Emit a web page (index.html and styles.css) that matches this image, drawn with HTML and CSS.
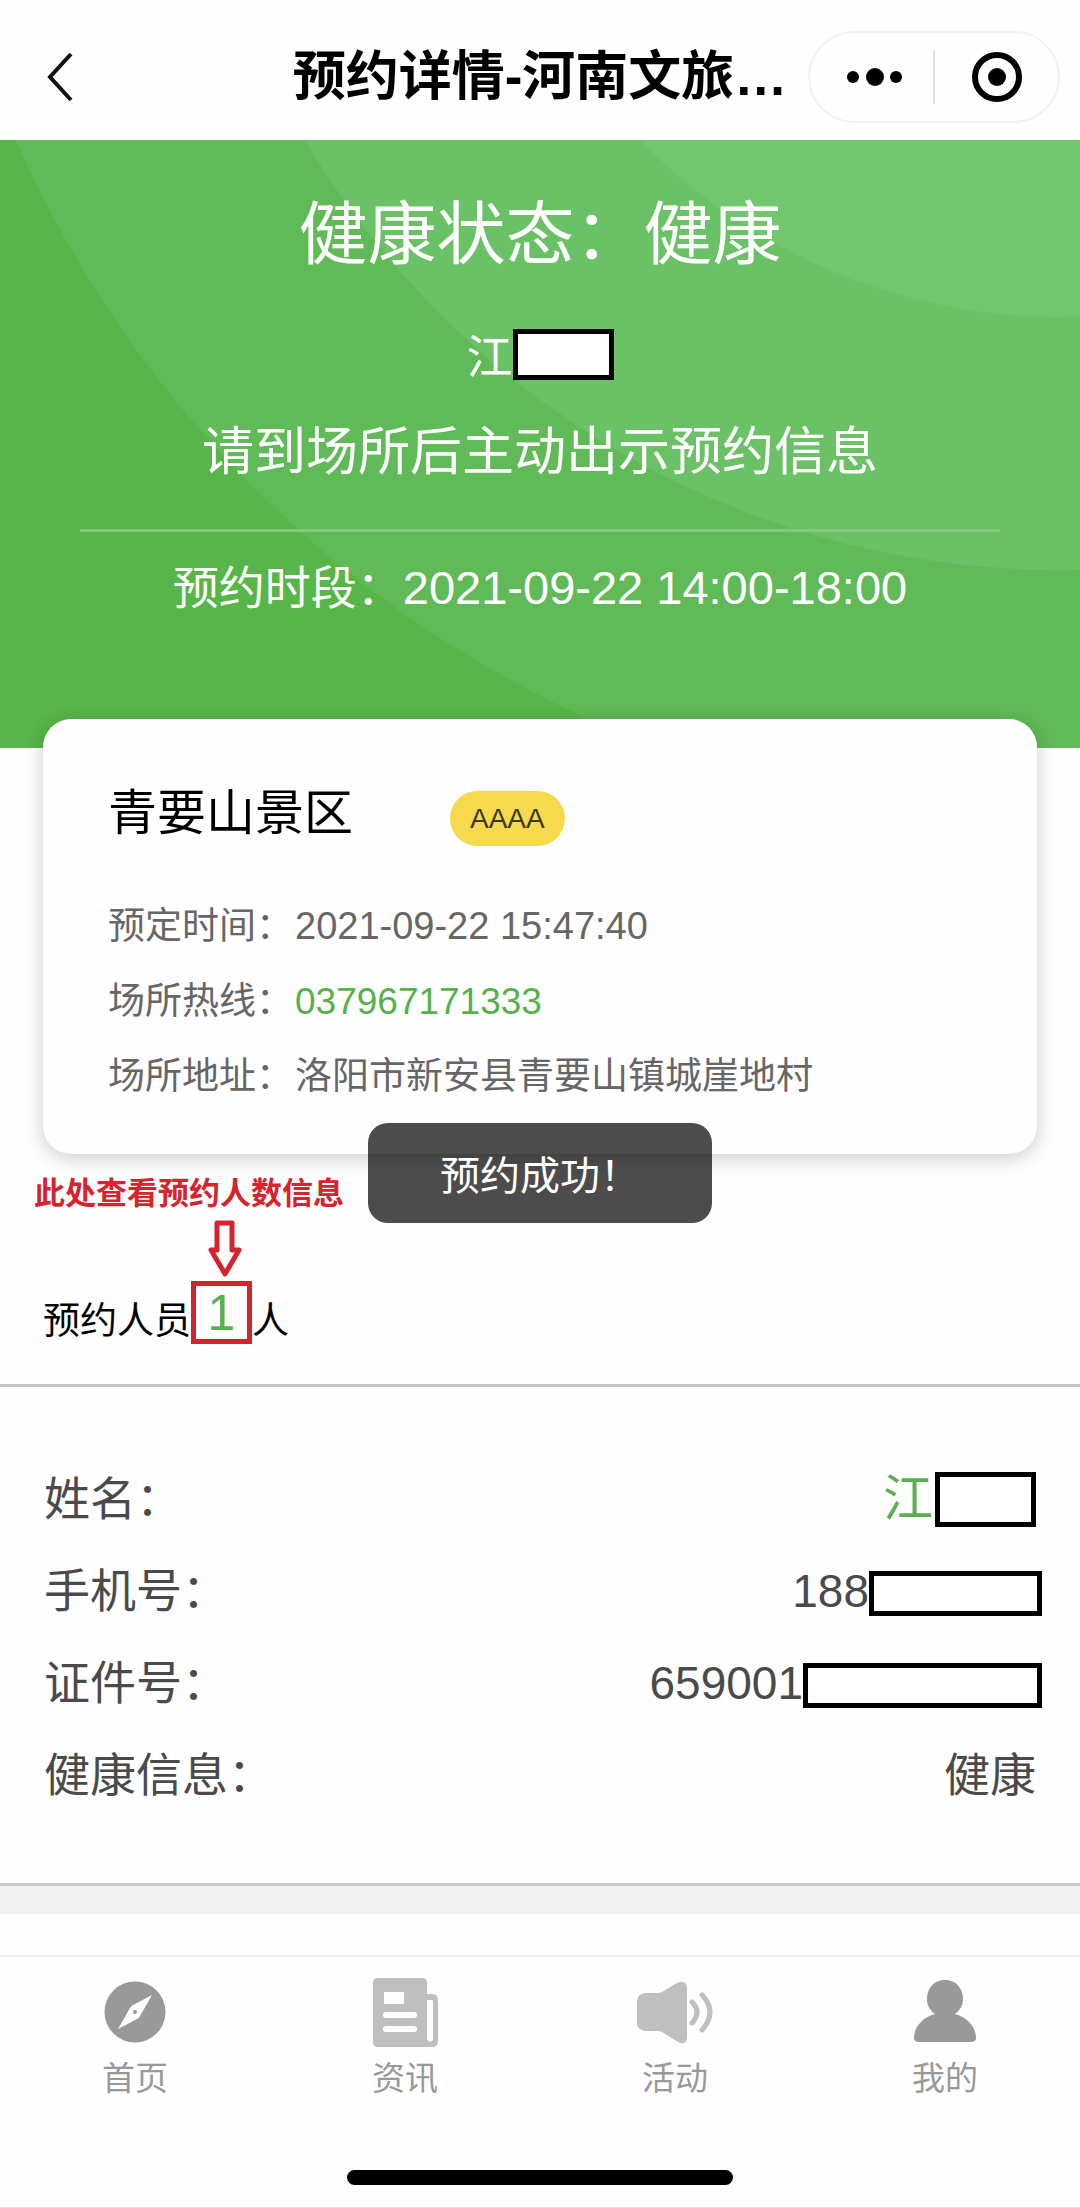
FILE: index.html
```html
<!DOCTYPE html>
<html lang="zh-CN">
<head>
  <meta charset="utf-8">
  <meta name="viewport" content="width=device-width, initial-scale=1">
  <title>预约详情-河南文旅</title>
  <link rel="stylesheet" href="styles.css">
</head>
<body>
  <header class="navbar">
    <button class="back" type="button" aria-label="返回">
      <svg width="28" height="50" viewBox="0 0 28 50" fill="none" stroke="#111" stroke-width="4"><path d="M25 2 4 25l21 23"/></svg>
    </button>
    <h1 class="navbar-title">预约详情-河南文旅…</h1>
    <div class="capsule">
      <button class="capsule-button" type="button" aria-label="更多">
        <svg width="64" height="20" viewBox="0 0 64 20"><circle cx="13" cy="10" r="6"/><circle cx="35" cy="10" r="9"/><circle cx="56" cy="10" r="6"/></svg>
      </button>
      <button class="capsule-button" type="button" aria-label="关闭">
        <svg width="52" height="52" viewBox="0 0 52 52"><circle cx="26" cy="26" r="22" fill="none" stroke="#000" stroke-width="6"/><circle cx="26" cy="26" r="9"/></svg>
      </button>
    </div>
  </header>

  <main class="content">
    <section class="hero">
      <h2 class="hero-status">健康状态：健康</h2>
      <p class="hero-name">江<span class="mask mask-name-small"></span></p>
      <p class="hero-hint">请到场所后主动出示预约信息</p>
      <hr class="hero-rule">
      <p class="hero-period">预约时段：<time class="hero-time">2021-09-22 14:00-18:00</time></p>
    </section>

    <section class="card">
      <div class="card-head">
        <h2 class="card-title">青要山景区</h2>
        <span class="badge">AAAA</span>
      </div>
      <dl class="details">
        <div class="detail"><dt>预定时间：</dt><dd><time class="booked-at">2021-09-22 15:47:40</time></dd></div>
        <div class="detail"><dt>场所热线：</dt><dd><a class="phone" href="tel:037967171333">037967171333</a></dd></div>
        <div class="detail"><dt>场所地址：</dt><dd>洛阳市新安县青要山镇城崖地村</dd></div>
      </dl>
      <div class="toast" role="status">预约成功！</div>
    </section>

    <section class="people">
      <p class="note">此处查看预约人数信息</p>
      <svg class="note-arrow" width="34" height="58" viewBox="0 0 34 58" fill="none" stroke="#d3232e" stroke-width="5" stroke-linejoin="round"><path d="M9 3h15v27h7L17 54 3 30h6z"/></svg>
      <p class="people-count">预约人员<strong class="count">1</strong>人</p>
    </section>

    <dl class="person">
      <div class="person-row"><dt>姓名：</dt><dd class="person-name">江<span class="mask mask-name"></span></dd></div>
      <div class="person-row"><dt>手机号：</dt><dd>188<span class="mask mask-phone"></span></dd></div>
      <div class="person-row"><dt>证件号：</dt><dd>659001<span class="mask mask-id"></span></dd></div>
      <div class="person-row"><dt>健康信息：</dt><dd>健康</dd></div>
    </dl>
    <div class="separator"></div>
  </main>

  <nav class="tabbar">
    <a class="tab" href="#home">
      <svg width="76" height="76" viewBox="0 0 76 76"><circle cx="38" cy="38" r="30.500" fill="#999"/><path d="M55 21 43 42Q42 44 40 45L21 55 33 34Q34 32 36 31z" fill="#fff"/><circle cx="38" cy="38" r="2" fill="#999"/></svg>
      首页
    </a>
    <a class="tab" href="#news">
      <svg width="76" height="76" viewBox="0 0 76 76"><path fill="#bfbfbf" fill-rule="evenodd" d="M11 4h44q5 0 5 5v11h5q6 0 6 6v41q0 6-6 6H11q-5 0-5-5V9q0-5 5-5zM60 26v40q3 3 6 0V27q0-1-2-1z"/><path fill="#fff" d="M17 18h20v12H17z"/><path d="M19 41h28M19 55h28" stroke="#fff" stroke-width="6" stroke-linecap="round"/></svg>
      资讯
    </a>
    <a class="tab" href="#events">
      <svg width="76" height="76" viewBox="0 0 76 76"><path fill="#bfbfbf" d="M8 19h13q2 0 4-1L40 9q9-4 10 5v50q-1 8-9 4L25 58q-2-1-4-1H8Q0 56 0 48V28q0-8 8-9z"/><path d="M55 28q10 10 0 21M65 21q16 17 0 35" fill="none" stroke="#bfbfbf" stroke-width="5" stroke-linecap="round"/></svg>
      活动
    </a>
    <a class="tab" href="#mine">
      <svg width="76" height="76" viewBox="0 0 76 76"><path fill="#999" d="M38 6c11 0 18 8 18 19 0 7-3 11-8 15 12 3 21 13 21 24q0 4-5 4H12q-5 0-5-4c0-11 9-21 21-24-5-4-8-8-8-15C20 14 27 6 38 6z"/></svg>
      我的
    </a>
  </nav>
  <footer class="home-area"><div class="home-indicator"></div></footer>
</body>
</html>
```
FILE: styles.css
```css
* {
  box-sizing: border-box;
}

body,
h1,
h2,
p,
dl,
dd {
  margin: 0;
}

body {
  min-height: 100vh;
  display: flex;
  flex-direction: column;
  background: #fefefe;
  color: #000;
  font-family: "Liberation Sans", "Noto Sans CJK SC", sans-serif;
}

h1,
h2 {
  font-weight: 400;
}

button {
  padding: 0;
  border: 0;
  background: none;
}

svg {
  display: block;
}

/* Top bar */
.navbar {
  display: grid;
  grid-template-columns: 1fr auto 1fr;
  align-items: center;
  height: 140px;
  padding: 14px 20px 0;
}

.back {
  justify-self: start;
  padding-left: 26px;
}

.navbar-title {
  font-size: 53px;
  line-height: 64px;
  font-weight: 700;
}

.capsule {
  justify-self: end;
  display: flex;
  align-items: center;
  width: 252px;
  height: 92px;
  border: 2px solid #f2f2f2;
  border-radius: 46px;
}

.capsule-button {
  flex: 1;
  display: flex;
  justify-content: center;
  align-items: center;
  height: 54px;
}

.capsule-button + .capsule-button {
  border-left: 2px solid #e2e2e2;
}

/* Green status area with three concentric discs */
.hero {
  padding: 48px 80px 130px;
  color: #fff;
  text-align: center;
  background:
    radial-gradient(circle at calc(100% - 20px) -410px, #72c76e 586px, transparent 588px),
    radial-gradient(circle at calc(100% - 20px) -448px, #6bc166 877px, transparent 879px),
    radial-gradient(circle at calc(100% - 20px) -460px, #61ba58 1140px, transparent 1142px),
    #58b549;
}

.hero-status {
  font-size: 69px;
  line-height: 96px;
}

.hero-name {
  display: flex;
  justify-content: center;
  margin-top: 45px;
  font-size: 46px;
  line-height: 56px;
}

.hero-hint {
  margin-top: 37px;
  font-size: 52px;
  line-height: 60px;
}

.hero-rule {
  height: 3px;
  margin: 47px 0 26px;
  border: 0;
  background: #83cb7c;
}

.hero-period {
  font-size: 46px;
  line-height: 60px;
}

.hero-time {
  font-size: 47px;
}

/* Blanked-out personal data */
.mask {
  display: block;
  border: 5px solid #000;
  background: #fff;
}

.mask-name-small {
  width: 101px;
  height: 51px;
}

.mask-name {
  width: 101px;
  height: 55px;
}

.mask-phone,
.mask-id {
  width: 173px;
  height: 45px;
  margin: 4px -6px 0 0;
}

.mask-id {
  width: 239px;
}

/* Venue card */
.card {
  position: relative;
  margin: -29px 43px 0;
  padding: 64px 65px 40px;
  border-radius: 28px;
  background: #fefefe;
  box-shadow: 0 4px 20px rgba(0, 0, 0, 0.2);
}

.card-head {
  display: flex;
  gap: 97px;
}

.card-title {
  font-size: 49px;
  line-height: 60px;
}

.badge {
  margin-top: 8px;
  padding: 0 20px;
  border-radius: 28px;
  background: #f6d94c;
  color: #3f3818;
  font-size: 28px;
  line-height: 55px;
}

.details {
  margin-top: 43px;
  color: #666;
  font-size: 37px;
  line-height: 75px;
}

.detail {
  display: flex;
  gap: 2px;
}

.booked-at {
  font-size: 38px;
}

.phone {
  color: #58b14c;
  text-decoration: none;
}

.toast {
  position: absolute;
  left: 50%;
  bottom: -69px;
  transform: translateX(-50%);
  padding: 6px 72px 0;
  border-radius: 20px;
  background: rgba(0, 0, 0, 0.7);
  color: #fff;
  font-size: 40px;
  line-height: 94px;
  white-space: nowrap;
}

/* Visitor count */
.people {
  padding: 20px 0 38px 34px;
  border-bottom: 3px solid #c4c4c4;
}

.note {
  color: #d8232f;
  font-size: 31px;
  font-weight: 700;
  line-height: 40px;
}

.note-arrow {
  margin: 6px 0 3px 174px;
}

.people-count {
  display: flex;
  align-items: flex-end;
  padding-left: 9px;
  font-size: 37px;
  line-height: 48px;
}

.count {
  width: 61px;
  height: 63px;
  margin-bottom: 2px;
  border: 5px solid #d3232e;
  color: #58b14c;
  font-size: 50px;
  font-weight: 400;
  line-height: 55px;
  text-align: center;
}

/* Visitor data */
.person {
  padding: 66px 44px 62px;
  border-bottom: 3px solid #c8c8c8;
  color: #4a4a4a;
  font-size: 46px;
  line-height: 92px;
}

.person-row {
  display: flex;
  justify-content: space-between;
}

.person-row dd {
  display: flex;
  align-items: center;
}

.person-row .person-name {
  gap: 2px;
  color: #58b14c;
  font-size: 50px;
}

.separator {
  height: 28px;
  background: #f0f0f0;
}

/* Bottom navigation */
.tabbar {
  display: grid;
  grid-template-columns: repeat(4, 1fr);
  margin-top: 41px;
  padding-top: 17px;
  border-top: 2px solid #eee;
}

.tab {
  display: flex;
  flex-direction: column;
  align-items: center;
  gap: 5px;
  color: #999;
  font-size: 33px;
  line-height: 48px;
  text-decoration: none;
}

.home-area {
  padding: 67px 0 22px;
  border-bottom: 1px solid #e4e4e4;
}

.home-indicator {
  width: 386px;
  height: 15px;
  margin: 0 auto;
  border-radius: 8px;
  background: #000;
}
```
